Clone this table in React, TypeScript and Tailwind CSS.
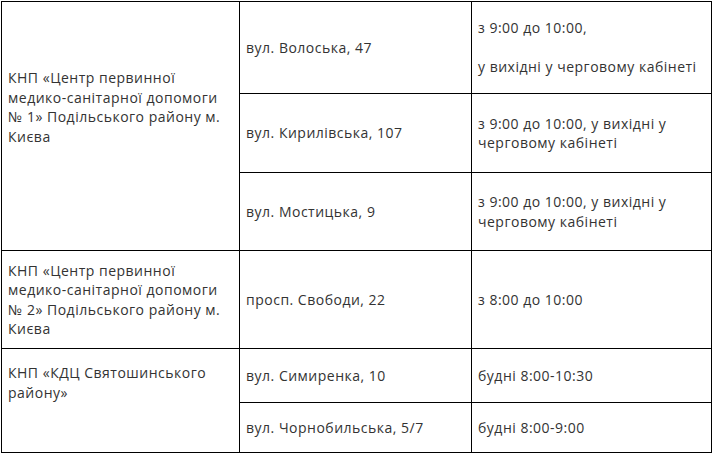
const cell = "border border-black px-[6px] py-0";

export default function App() {
  return (
    <div className="bg-white w-[713px] h-[453px] pt-px pl-px font-['Open_Sans',sans-serif] text-[14px] leading-[19.5px] tracking-[0.5px] text-[#333]">
      <table className="border-collapse table-fixed w-[710px]">
        <colgroup>
          <col className="w-[238px]" />
          <col className="w-[232px]" />
          <col className="w-[240px]" />
        </colgroup>
        <tbody>
          <tr className="h-[92px]">
            <td rowSpan={3} className={`${cell} align-top pt-[66px]`}>
              КНП «Центр первинної
              <br />
              медико-санітарної допомоги
              <br />
              № 1» Подільського району м.
              <br />
              Києва
            </td>
            <td className={`${cell} align-middle`}>вул. Волоська, 47</td>
            <td className={`${cell} align-middle`}>
              з 9:00 до 10:00,
              <br />
              <br />
              у вихідні у черговому кабінеті
            </td>
          </tr>
          <tr className="h-[79px]">
            <td className={`${cell} align-middle`}>вул. Кирилівська, 107</td>
            <td className={`${cell} align-middle`}>
              з 9:00 до 10:00, у вихідні у
              <br />
              черговому кабінеті
            </td>
          </tr>
          <tr className="h-[78px]">
            <td className={`${cell} align-middle`}>вул. Мостицька, 9</td>
            <td className={`${cell} align-middle`}>
              з 9:00 до 10:00, у вихідні у
              <br />
              черговому кабінеті
            </td>
          </tr>
          <tr className="h-[98px]">
            <td className={`${cell} align-middle`}>
              КНП «Центр первинної
              <br />
              медико-санітарної допомоги
              <br />
              № 2» Подільського району м.
              <br />
              Києва
            </td>
            <td className={`${cell} align-middle`}>просп. Свободи, 22</td>
            <td className={`${cell} align-middle`}>з 8:00 до 10:00</td>
          </tr>
          <tr className="h-[54px]">
            <td rowSpan={2} className={`${cell} align-top pt-[14px]`}>
              КНП «КДЦ Святошинського
              <br />
              району»
            </td>
            <td className={`${cell} align-middle`}>вул. Симиренка, 10</td>
            <td className={`${cell} align-middle`}>будні 8:00-10:30</td>
          </tr>
          <tr className="h-[50px]">
            <td className={`${cell} align-middle`}>вул. Чорнобильська, 5/7</td>
            <td className={`${cell} align-middle`}>будні 8:00-9:00</td>
          </tr>
        </tbody>
      </table>
    </div>
  );
}
